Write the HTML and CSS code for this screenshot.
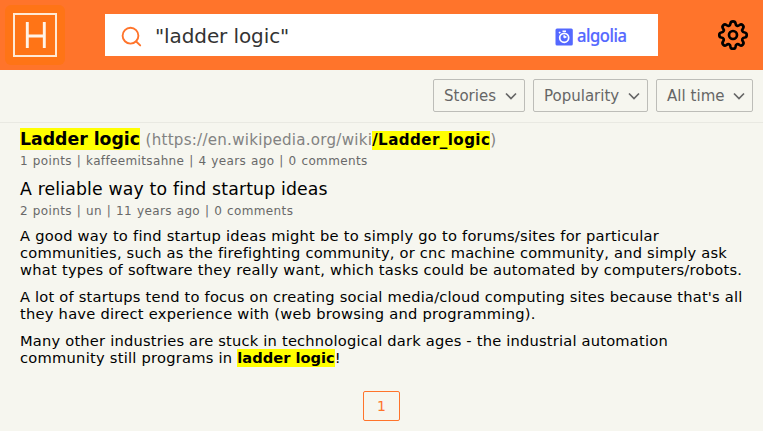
FILE: index.html
```html
<!DOCTYPE html>
<html lang="en">
<head>
<meta charset="utf-8">
<title>Search: "ladder logic"</title>
<link rel="stylesheet" href="styles.css">
</head>
<body>
<header class="header">
  <a class="logo"><svg width="60" height="60" viewBox="0 0 60 60"><rect width="60" height="60" rx="6" fill="#ff7416"/><path d="M9 9H51V51H9Z" fill="none" stroke="#ffe9d5" stroke-width="2"/><path d="M22.3 17V43M39.3 17V43M22.3 31H39.3" fill="none" stroke="#fff3e8" stroke-width="2.9"/></svg></a>
  <div class="search">
    <svg class="lens" width="22" height="22" viewBox="0 0 22 22" fill="none" stroke="#ff742b" stroke-width="1.9" stroke-linecap="round"><circle cx="9.5" cy="9.7" r="7.9"/><path d="M15.2 15.5L19.2 19.4"/></svg>
    <span class="query">"ladder logic"</span>
    <span class="algolia"><svg width="18" height="18" viewBox="0 0 18 18"><rect x=".5" y=".5" width="17.3" height="17" rx="1.5" fill="#5468ff"/><circle cx="9.2" cy="9.8" r="4.5" fill="none" stroke="#fff" stroke-width="1.7"/><path d="M7.5 3.2H11M4 5.2L5.3 4M9.2 9.8V7.2M9.2 9.8L11.4 8.5" stroke="#fff" stroke-width="1.6" fill="none"/></svg><span class="brand">algolia</span></span>
  </div>
  <svg class="gear" width="32" height="32" viewBox="0 0 32 32" fill="none" stroke="#000" stroke-width="2.7" stroke-linejoin="round"><circle cx="16" cy="16" r="4"/><path d="M13.5 4.3C13.9 1.6 18.1 1.6 18.5 4.3C18.8 6.8 20.7 7.5 22.6 6C24.8 4.4 27.6 7.2 26 9.4C24.5 11.3 25.2 13.2 27.7 13.5C30.4 13.9 30.4 18.1 27.7 18.5C25.2 18.8 24.5 20.7 26 22.6C27.6 24.8 24.8 27.6 22.6 26C20.7 24.5 18.8 25.2 18.5 27.7C18.1 30.4 13.9 30.4 13.5 27.7C13.2 25.2 11.3 24.5 9.4 26C7.2 27.6 4.4 24.8 6 22.6C7.5 20.7 6.8 18.8 4.3 18.5C1.6 18.1 1.6 13.9 4.3 13.5C6.8 13.2 7.5 11.3 6 9.4C4.4 7.2 7.2 4.4 9.4 6C11.3 7.5 13.2 6.8 13.5 4.3Z"/></svg>
</header>
<nav class="filters">
  <button class="filter stories"><span>Stories</span><svg width="12" height="8" viewBox="0 0 12 8"><path d="M1 1.5L6 6.5L11 1.5"/></svg></button>
  <button class="filter popularity"><span>Popularity</span><svg width="12" height="8" viewBox="0 0 12 8"><path d="M1 1.5L6 6.5L11 1.5"/></svg></button>
  <button class="filter time"><span>All time</span><svg width="12" height="8" viewBox="0 0 12 8"><path d="M1 1.5L6 6.5L11 1.5"/></svg></button>
</nav>
<main class="results">
  <article class="story">
    <h2 class="title"><mark>Ladder logic</mark> <span class="url">(https://en.wikipedia.org/wiki<mark>/Ladder_logic</mark>)</span></h2>
    <div class="meta">1 points | kaffeemitsahne | 4 years ago | 0 comments</div>
  </article>
  <article class="story">
    <h2 class="title plain">A reliable way to find startup ideas</h2>
    <div class="meta second">2 points | un | 11 years ago | 0 comments</div>
    <div class="text">
      <p>A good way to find startup ideas might be to simply go to forums/sites for particular<br><span class="snug">communities, such as the firefighting community, or cnc machine community, and simply ask</span><br>what types of software they really want, which tasks could be automated by computers/robots.</p>
      <p><span class="snug">A lot of startups tend to focus on creating social media/cloud computing sites because that's all</span><br>they have direct experience with (web browsing and programming).</p>
      <p><span class="snug">Many other industries are stuck in technological dark ages - the industrial automation</span><br>community still programs in <mark>ladder logic</mark>!</p>
    </div>
  </article>
</main>
<div class="pages"><button class="page">1</button></div>
</body>
</html>
```
FILE: styles.css
```css
* { box-sizing: border-box; }
body { margin: 0; height: 431px; overflow: hidden; background: #f6f6ef; font-family: Verdana, "DejaVu Sans", sans-serif; color: #000; }
.header { height: 70px; background: #ff742b; display: flex; align-items: center; padding: 0 14px 0 5px; }
.logo, .logo svg { display: block; }
.search { width: 553px; height: 42px; margin-left: 40px; background: #fff; display: flex; align-items: center; padding-left: 16px; }
.lens { margin-top: 3px; }
.query { margin-left: 12px; padding-top: 1px; width: 388px; font-size: 20px; letter-spacing: -.1px; color: #333; white-space: nowrap; }
.algolia { display: flex; align-items: center; gap: 4px; margin: 3px 0 0 12px; color: #5468ff; }
.brand { font: 500 18px/24px "Noto Sans", sans-serif; letter-spacing: -.5px; margin-top: -4px; transform: scaleX(.92); transform-origin: left; -webkit-text-stroke: .2px #5468ff; }
.gear { margin-left: auto; }
.filters { height: 53px; display: flex; justify-content: flex-end; align-items: flex-start; gap: 8px; padding: 9px 10px 0 0; border-bottom: 1px solid #e9e9e2; }
.filter { height: 33px; display: flex; align-items: center; justify-content: space-between; padding: 0 7px 0 10px; background: transparent; border: 1px solid #bdbdb8; border-radius: 2px; font: 15px "DejaVu Sans", sans-serif; color: #666; white-space: nowrap; }
.filter path { fill: none; stroke: #666; stroke-width: 1.7; }
.stories { width: 92px; }
.popularity { width: 115px; }
.time { width: 97px; }
.time span { letter-spacing: .05px; }
.results { padding: 4px 20px 0; white-space: nowrap; }
.story { height: 50px; }
.title { margin: 0; font-size: 17.3px; line-height: 24px; font-weight: 400; }
.plain { letter-spacing: .16px; }
mark { background: #ff0; color: #000; font-weight: 700; letter-spacing: 0; padding-bottom: 1px; }
.title > mark { padding: 1px 0; }
.url { color: #828282; font-size: 15.1px; letter-spacing: .25px; }
.url mark { letter-spacing: .43px; }
.meta { font-size: 12px; line-height: 18px; letter-spacing: .36px; word-spacing: .7px; color: #696969; }
.second { padding-top: 1px; margin-bottom: -1px; }
.text { padding-top: 8px; font-size: 14.67px; line-height: 17px; letter-spacing: .245px; }
.snug { letter-spacing: .2px; }
.text p { margin: 0 0 10px; }
.pages { margin-top: 164px; display: flex; justify-content: center; }
.page { width: 37px; height: 30px; padding: 0; border: 1px solid #ff742b; border-radius: 2px; background: transparent; font: 14px "DejaVu Sans", sans-serif; color: #ff742b; }
```
